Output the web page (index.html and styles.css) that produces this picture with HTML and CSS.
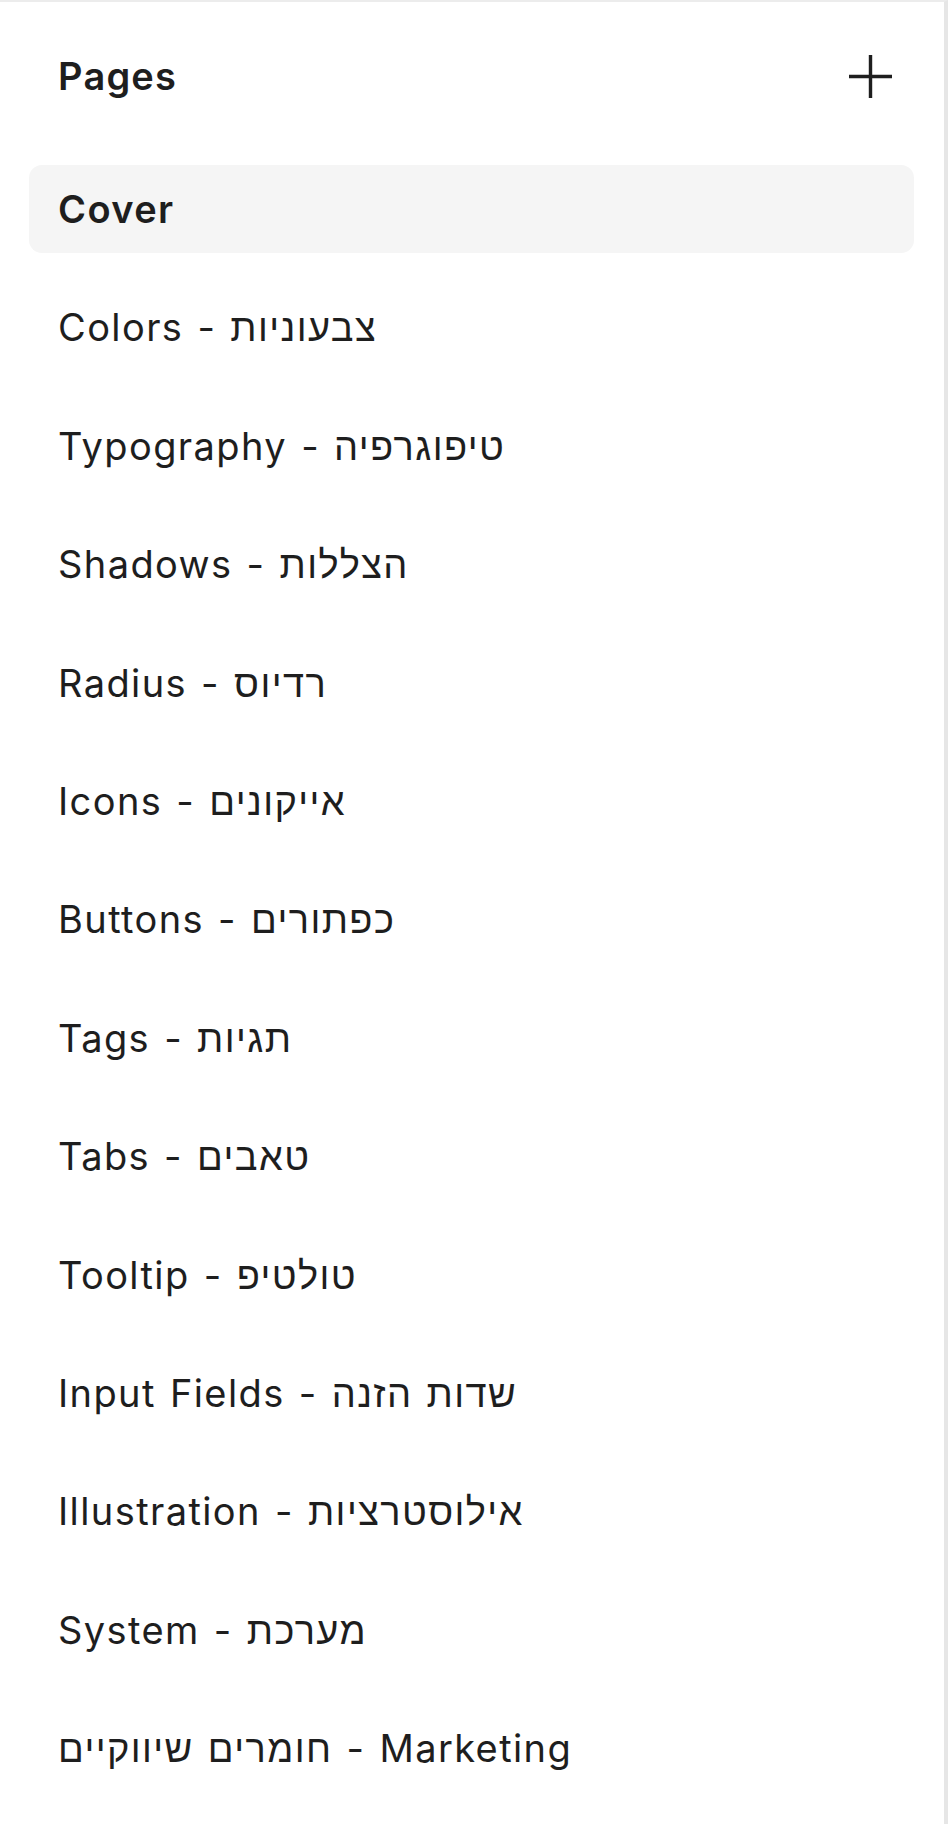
FILE: index.html
```html
<!DOCTYPE html>
<html lang="en">
<head>
  <meta charset="UTF-8" />
  <meta name="viewport" content="width=device-width, initial-scale=1" />
  <title>Pages</title>

  <link rel="stylesheet" href="styles.css">
</head>
<body>
  <aside class="pages-panel">
    <header class="panel-header">
      <h2>Pages</h2>
      <button class="add-btn" title="Add page">
        <svg xmlns="http://www.w3.org/2000/svg" viewBox="0 0 44 44">
          <path d="M22 0v44M0 22h44" />
        </svg>
      </button>
    </header>

    <ul class="page-list">
      <li class="page-item active">Cover</li>
      <li class="page-item">Colors - צבעוניות</li>
      <li class="page-item">Typography - טיפוגרפיה</li>
      <li class="page-item">Shadows - הצללות</li>
      <li class="page-item">Radius - רדיוס</li>
      <li class="page-item">Icons - אייקונים</li>
      <li class="page-item">Buttons - כפתורים</li>
      <li class="page-item">Tags - תגיות</li>
      <li class="page-item">Tabs - טאבים</li>
      <li class="page-item">Tooltip - טולטיפ</li>
      <li class="page-item">Input Fields - שדות הזנה</li>
      <li class="page-item">Illustration - אילוסטרציות</li>
      <li class="page-item">System - מערכת</li>
      <li class="page-item">חומרים שיווקיים - Marketing</li>
    </ul>
  </aside>
</body>
</html>
```

FILE: styles.css
```css
body {
  margin: 0;
  background-color: #fff;
  color: #1e1e1e;
  font-family: Inter, "Liberation Sans", sans-serif;
}

.pages-panel {
  width: 948px;
  min-height: 1824px;
  box-sizing: border-box;
  border-top: 2px solid #ececec;
  border-right: 4px solid #e6e6e6;
}

.panel-header {
  display: flex;
  align-items: center;
  justify-content: space-between;
  padding: 51px 52px 0 58px;
}

.panel-header h2 {
  margin: 0;
  font-size: 38px;
  line-height: 46px;
  font-weight: 600;
  letter-spacing: 1.2px;
}

.add-btn {
  width: 43px;
  height: 43px;
  padding: 0;
  border: none;
  background: none;
  cursor: pointer;
}

.add-btn svg {
  display: block;
  width: 43px;
  height: 43px;
  stroke: #1e1e1e;
  stroke-width: 3.5;
  fill: none;
}

.page-list {
  list-style: none;
  margin: 66px 30px 0 29px;
  padding: 0;
  display: flex;
  flex-direction: column;
  gap: 30.4px;
}

.page-item {
  height: 88px;
  display: flex;
  align-items: center;
  padding-left: 29px;
  border-radius: 13px;
  font-size: 38px;
  letter-spacing: 1.4px;
  word-spacing: 2px;
  white-space: nowrap;
  cursor: pointer;
}

.page-item.active {
  background-color: #f5f5f5;
  font-weight: 600;
}
```
